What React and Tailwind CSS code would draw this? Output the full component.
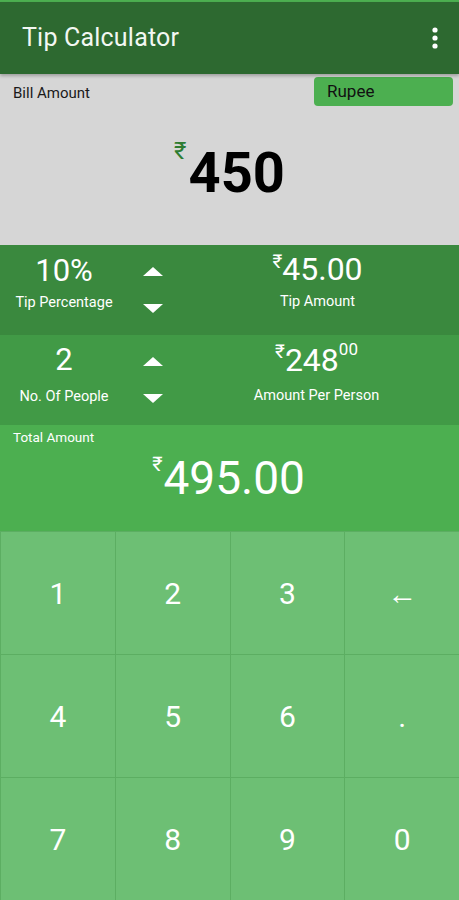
import React from 'react';

const Arrows = () => (
  <div className="w-[50px] flex flex-col items-center justify-between py-[22px] h-full">
    <svg width="20" height="9" viewBox="0 0 20 9"><path d="M10 0 L20 9 L0 9 Z" fill="white" /></svg>
    <svg width="20" height="9" viewBox="0 0 20 9"><path d="M0 0 L20 0 L10 9 Z" fill="white" /></svg>
  </div>
);

const keys = ['1', '2', '3', '←', '4', '5', '6', '.', '7', '8', '9', '0'];

const App = () => {
  return (
    <div className="w-[459px] h-[900px] flex flex-col overflow-hidden" style={{ fontFamily: 'Roboto, "Noto Sans", sans-serif' }}>
      {/* status strip */}
      <div className="h-[2px] bg-[#4caf50]" />

      {/* App bar */}
      <div className="h-[72px] bg-[#2d6930] flex items-center justify-between pl-[22px] pr-[20px] shadow-[0_2px_3px_rgba(0,0,0,0.25)] z-10">
        <span className="text-[#f2f7f2] text-[25px] tracking-[0.2px]">Tip Calculator</span>
        <svg width="8" height="22" viewBox="0 0 8 22">
          <circle cx="4" cy="3" r="2.6" fill="white" />
          <circle cx="4" cy="11" r="2.6" fill="white" />
          <circle cx="4" cy="19" r="2.6" fill="white" />
        </svg>
      </div>

      {/* Bill amount */}
      <div className="h-[171px] bg-[#d6d6d6] flex flex-col">
        <div className="flex items-center justify-between pl-[13px] pr-[6px] pt-[3px]">
          <span className="text-[15px] text-[#1a1a1a] mt-[3px]">Bill Amount</span>
          <div className="w-[139px] h-[29px] bg-[#4caf50] rounded-[4px] flex items-center pl-[13px]">
            <span className="text-[17px] text-[#111]">Rupee</span>
          </div>
        </div>
        <div className="flex-1 flex justify-center items-start pt-[33px]">
          <span className="text-[#2e7d32] text-[24px] leading-none mt-[0px] mr-[2px]">₹</span>
          <span className="text-[56px] font-bold text-black leading-none mt-[6px]">450</span>
        </div>
      </div>

      {/* Tip row */}
      <div className="h-[90px] bg-[#3a893e] flex text-white">
        <div className="w-[128px] flex flex-col items-center pt-[8px]">
          <span className="text-[31px] leading-[36px]">10%</span>
          <span className="text-[14.5px] mt-[3px]">Tip Percentage</span>
        </div>
        <Arrows />
        <div className="flex-1 flex flex-col items-center pt-[5px] pr-[2px]">
          <div className="flex items-start">
            <span className="text-[19px] leading-none mt-[2px]">₹</span>
            <span className="text-[32px] leading-[38px]">45.00</span>
          </div>
          <span className="text-[14.5px] mt-[3px]">Tip Amount</span>
        </div>
      </div>

      {/* People row */}
      <div className="h-[90px] bg-[#419a46] flex text-white">
        <div className="w-[128px] flex flex-col items-center pt-[5px]">
          <span className="text-[31px] leading-[40px]">2</span>
          <span className="text-[14.5px] mt-[6px]">No. Of People</span>
        </div>
        <Arrows />
        <div className="flex-1 flex flex-col items-center pt-[5px] pr-[4px]">
          <div className="flex items-start">
            <span className="text-[19px] leading-none mt-[2px]">₹</span>
            <span className="text-[32px] leading-[40px]">248</span>
            <span className="text-[17px] leading-none mt-[1px]">00</span>
          </div>
          <span className="text-[14.5px] mt-[5px]">Amount Per Person</span>
        </div>
      </div>

      {/* Total */}
      <div className="h-[106px] bg-[#4caf50] flex flex-col text-white">
        <span className="text-[13.5px] pl-[13px] pt-[2px]">Total Amount</span>
        <div className="flex justify-center items-start mt-[5px] pr-[2px]">
          <span className="text-[20px] leading-none mt-[2px] mr-[1px]">₹</span>
          <span className="text-[46px] leading-[52px]">495.00</span>
        </div>
      </div>

      {/* Keypad */}
      <div className="flex-1 bg-[#6dbf74] grid grid-cols-4 grid-rows-3">
        {keys.map((k, i) => (
          <div
            key={i}
            className="flex items-center justify-center text-white text-[30px] border-t border-l border-[#5cae62]"
          >
            {k}
          </div>
        ))}
      </div>
    </div>
  );
};

export default App;
